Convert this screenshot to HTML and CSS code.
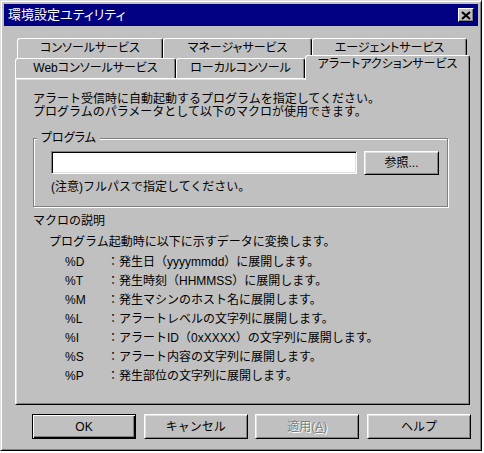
FILE: index.html
```html
<!DOCTYPE html>
<html lang="ja">
<head>
<meta charset="utf-8">
<title>環境設定ユティリティ</title>
<link rel="stylesheet" href="styles.css">
</head>
<body>
<div class="window">
  <div class="titlebar">
    <span class="title">環境設定ユティリティ</span>
    <span class="close" aria-label="閉じる">
      <svg width="10" height="9" viewBox="0 0 10 9"><path d="M1 1 L9 8 M9 1 L1 8" stroke="#000" stroke-width="2.2" fill="none"/></svg>
    </span>
  </div>
  <div class="content">
    <div class="tabs">
      <div class="tab-row back">
        <div class="tab tab-console">コンソールサービス</div>
        <div class="tab tab-manager">マネージャサービス</div>
        <div class="tab tab-agent">エージェントサービス</div>
      </div>
      <div class="tab-row front">
        <div class="tab tab-web">Webコンソールサービス</div>
        <div class="tab tab-local">ローカルコンソール</div>
        <div class="tab tab-alert selected">アラートアクションサービス</div>
      </div>
    </div>
    <div class="panel">
      <p class="intro">アラート受信時に自動起動するプログラムを指定してください。<br>プログラムのパラメータとして以下のマクロが使用できます。</p>
      <fieldset class="group">
        <legend>プログラム</legend>
        <div class="input-row">
          <div class="textbox"></div>
          <div class="btn browse">参照...</div>
        </div>
        <div class="note">(注意)フルパスで指定してください。</div>
      </fieldset>
      <div class="section-title">マクロの説明</div>
      <div class="section-sub">プログラム起動時に以下に示すデータに変換します。</div>
      <div class="macros">
        <span class="key">%D</span><span class="desc">：発生日（yyyymmdd）に展開します。</span>
        <span class="key">%T</span><span class="desc">：発生時刻（HHMMSS）に展開します。</span>
        <span class="key">%M</span><span class="desc">：発生マシンのホスト名に展開します。</span>
        <span class="key">%L</span><span class="desc">：アラートレベルの文字列に展開します。</span>
        <span class="key">%I</span><span class="desc">：アラートID（0xXXXX）の文字列に展開します。</span>
        <span class="key">%S</span><span class="desc">：アラート内容の文字列に展開します。</span>
        <span class="key">%P</span><span class="desc">：発生部位の文字列に展開します。</span>
      </div>
    </div>
    <div class="buttons">
      <div class="btn default">OK</div>
      <div class="btn">キャンセル</div>
      <div class="btn disabled">適用(<u>A</u>)</div>
      <div class="btn">ヘルプ</div>
    </div>
  </div>
</div>
</body>
</html>
```
FILE: styles.css
```css
* { box-sizing: border-box; }
html, body { margin: 0; padding: 0; background: #ffffff; }
body {
  font-family: "Liberation Sans", "Noto Sans CJK JP", sans-serif;
  font-size: 12px;
  color: #000;
}
.window {
  width: 482px;
  height: 451px;
  background: #c0c0c0;
  border: 1px solid;
  border-color: #dfdfdf #000 #000 #dfdfdf;
  box-shadow: inset 1px 1px #fff, inset -1px -1px #808080;
  padding: 3px;
}
.titlebar {
  height: 22px;
  background: #000080;
  color: #fff;
  display: flex;
  align-items: center;
  padding: 0 4px 0 4px;
}
.title {
  font-size: 13px;
  font-feature-settings: "palt";
  line-height: 16px;
}
.close {
  margin-left: auto;
  width: 16px;
  height: 14px;
  background: #c0c0c0;
  border: 1px solid;
  border-color: #fff #000 #000 #fff;
  box-shadow: inset -1px -1px #808080;
  display: flex;
  align-items: center;
  justify-content: center;
  padding-right: 1px;
}
.close svg { display: block; }
.content {
  padding: 12px 0 0 11px;
}
.tab-row {
  display: flex;
  height: 20px;
}
.tab-row.back { padding-left: 2px; }
.tab-row.front { align-items: flex-end; }
.tab {
  height: 20px;
  border-top: 1px solid #fff;
  border-left: 1px solid #fff;
  border-right: 1px solid #000;
  box-shadow: inset -1px 0 #808080;
  border-radius: 3px 3px 0 0;
  text-align: center;
  line-height: 19px;
  white-space: nowrap;
  font-feature-settings: "palt";
  background: #c0c0c0;
}
.tab-console { width: 146px; }
.tab-manager { width: 149px; }
.tab-agent { width: 155px; }
.tab-web { width: 161px; }
.tab-local { width: 129px; }
.tab-alert { width: 165px; }
.tab.selected {
  height: 25px;
  margin-bottom: -2px;
  position: relative;
  z-index: 1;
  line-height: 17px;
}
.panel {
  width: 455px;
  height: 327px;
  border: 1px solid;
  border-color: #fff #000 #000 #fff;
  box-shadow: inset 1px 1px #dfdfdf, inset -1px -1px #808080;
  padding: 14px 21px 0 17px;
}
.intro {
  margin: 0;
  line-height: 13px;
}
.group {
  margin: 12px 0 0 0;
  padding: 6px 8px 12px 17px;
  border: 1px solid #808080;
  box-shadow: inset 1px 1px #fff, 1px 1px #fff;
  min-inline-size: 0;
}
.group legend {
  margin-left: -14px;
  padding: 0 4px;
  line-height: 14px;
  background: #c0c0c0;
  font-feature-settings: "palt";
}
.input-row {
  display: flex;
  align-items: flex-start;
  gap: 7px;
}
.textbox {
  width: 306px;
  height: 23px;
  background: #fff;
  border: 1px solid;
  border-color: #808080 #fff #fff #808080;
  box-shadow: inset 1px 1px #000, inset -1px -1px #dfdfdf;
}
.btn {
  height: 25px;
  background: #c0c0c0;
  border: 1px solid;
  border-color: #fff #000 #000 #fff;
  box-shadow: inset 1px 1px #dfdfdf, inset -1px -1px #808080;
  display: flex;
  align-items: center;
  justify-content: center;
  line-height: 14px;
  white-space: nowrap;
}
.btn.browse {
  width: 75px;
  height: 24px;
}
.note {
  margin-top: 5px;
  line-height: 14px;
}
.section-title {
  margin-top: 7px;
  line-height: 14px;
}
.section-sub {
  margin-top: 7px;
  margin-left: 16px;
  line-height: 14px;
}
.macros {
  margin: 4px 0 0 32px;
  display: grid;
  grid-template-columns: 42px auto;
  line-height: 19px;
}
.buttons {
  width: 439px;
  margin: 9px 0 0 17px;
  display: flex;
  justify-content: space-between;
}
.buttons .btn { width: 104px; }
.btn.default {
  border-color: #000;
  box-shadow: inset 1px 1px #fff, inset -1px -1px #000, inset -2px -2px #808080;
}
.btn.disabled {
  color: #808080;
  text-shadow: 1px 1px #fff;
}
```
